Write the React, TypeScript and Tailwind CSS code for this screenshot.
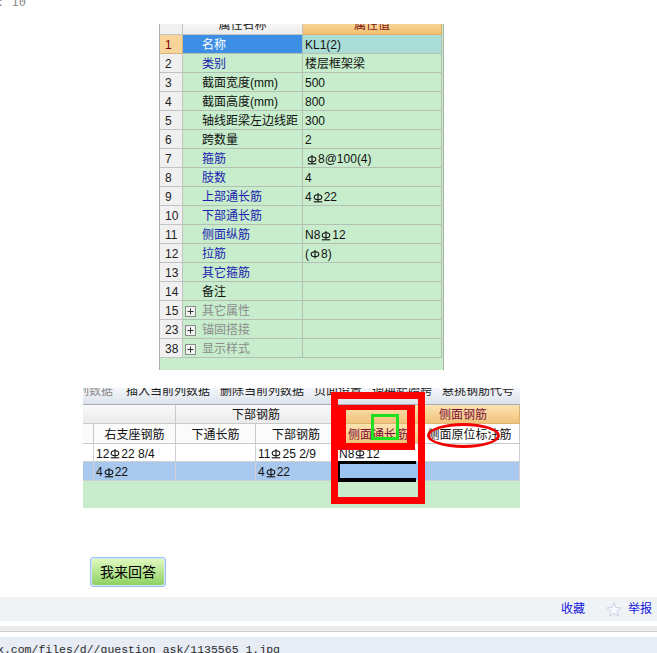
import React from "react";

const SANS = "font-['Liberation_Sans','Noto_Sans_CJK_SC',sans-serif]";

function Rebar({ bar = true }: { bar?: boolean }) {
  return (
    <svg width="10" height="11" viewBox="0 0 10 11" className="inline-block align-[-1px] mx-[1px]">
      <ellipse cx="5" cy="5.2" rx="3.8" ry="2.5" fill="none" stroke="currentColor" strokeWidth="1.1" />
      <line x1="5" y1="1" x2="5" y2="9.6" stroke="currentColor" strokeWidth="1.1" />
      {bar && <line x1="0.8" y1="9.8" x2="9.2" y2="9.8" stroke="currentColor" strokeWidth="1.1" />}
    </svg>
  );
}

function PlusBox() {
  return (
    <svg width="11" height="11" viewBox="0 0 11 11" className="shrink-0">
      <rect x="0.5" y="0.5" width="10" height="10" fill="#f2f2f2" stroke="#8a8a8a" />
      <line x1="2.5" y1="5.5" x2="8.5" y2="5.5" stroke="#333" strokeWidth="1" />
      <line x1="5.5" y1="2.5" x2="5.5" y2="8.5" stroke="#333" strokeWidth="1" />
    </svg>
  );
}

type Row = {
  n: string;
  name: string;
  val?: React.ReactNode;
  color: "blue" | "black" | "gray";
  plus?: boolean;
  sel?: boolean;
};

const rows: Row[] = [
  { n: "1", name: "名称", val: "KL1(2)", color: "black", sel: true },
  { n: "2", name: "类别", val: "楼层框架梁", color: "blue" },
  { n: "3", name: "截面宽度(mm)", val: "500", color: "black" },
  { n: "4", name: "截面高度(mm)", val: "800", color: "black" },
  { n: "5", name: "轴线距梁左边线距", val: "300", color: "black" },
  { n: "6", name: "跨数量", val: "2", color: "black" },
  {
    n: "7",
    name: "箍筋",
    val: (
      <>
        <span className="ml-[1px]" />
        <Rebar />
        8@100(4)
      </>
    ),
    color: "blue",
  },
  { n: "8", name: "肢数", val: "4", color: "blue" },
  {
    n: "9",
    name: "上部通长筋",
    val: (
      <>
        4<Rebar />22
      </>
    ),
    color: "blue",
  },
  { n: "10", name: "下部通长筋", color: "blue" },
  {
    n: "11",
    name: "侧面纵筋",
    val: (
      <>
        N8<Rebar />12
      </>
    ),
    color: "blue",
  },
  {
    n: "12",
    name: "拉筋",
    val: (
      <>
        (<Rebar bar={false} />8)
      </>
    ),
    color: "blue",
  },
  { n: "13", name: "其它箍筋", color: "blue" },
  { n: "14", name: "备注", color: "black" },
  { n: "15", name: "其它属性", color: "gray", plus: true },
  { n: "23", name: "锚固搭接", color: "gray", plus: true },
  { n: "38", name: "显示样式", color: "gray", plus: true },
];

const nameColor = {
  blue: "text-[#1c1cb0]",
  black: "text-[#111111]",
  gray: "text-[#8c8c8c]",
};

function TopTable() {
  return (
    <div className={`ml-[159px] mt-[17px] w-[285px] h-[346px] overflow-hidden border-x border-[#a7b1a7] bg-[#c7edcc] ${SANS} text-[12px]`}>
      <div className="-mt-[8px]">
        <div className="flex h-[19px]">
          <div className="w-[23px] border-r border-b border-[#c4c4c4] bg-[#f0f0f0]" />
          <div className="w-[120px] border-r border-b border-[#c4c4c4] bg-gradient-to-b from-[#fdfdfd] to-[#ececec] flex items-center justify-center leading-[12px] text-[#222]">
            属性名称
          </div>
          <div className="w-[139px] border-r border-b border-[#d9ae66] bg-gradient-to-b from-[#fbe3b0] to-[#f1c070] flex items-center justify-center leading-[12px] text-[#7c1010]">
            属性值
          </div>
        </div>
        {rows.map((r) => (
          <div key={r.n} className="flex h-[19px]">
            <div
              className={`w-[23px] border-r border-b flex items-center pl-[5px] pt-[2px] leading-[12px] ${
                r.sel ? "bg-[#f8d49a] text-[#7a0000] border-[#d6b37a]" : "bg-[#f0f0f0] text-[#222] border-[#c2c2c2]"
              }`}
            >
              {r.n}
            </div>
            <div
              className={`w-[120px] border-r border-b border-[#b3c0b3] flex items-center pt-[2px] leading-[12px] whitespace-nowrap ${
                r.sel ? "bg-[#3d8fe6] text-white" : nameColor[r.color]
              } ${r.plus ? "pl-[2px]" : "pl-[19px]"}`}
            >
              {r.plus && <PlusBox />}
              {r.plus && <span className="w-[6px]" />}
              {r.name}
            </div>
            <div
              className={`w-[139px] border-r border-b border-[#b3c0b3] flex items-center pl-[2px] pt-[2px] leading-[12px] text-[#111] whitespace-nowrap ${
                r.sel ? "bg-[#a9ddd5]" : ""
              }`}
            >
              {r.val}
            </div>
          </div>
        ))}
      </div>
    </div>
  );
}

function BottomTable() {
  const hd = "border-r border-b border-[#c9c9c9] flex items-center justify-center pt-[2px] leading-[12px]";
  const cell = "border-r border-b border-[#d0d0d0] flex items-center pl-[2px] pt-[2px] leading-[12px] whitespace-nowrap";
  return (
    <div className={`relative ml-[83px] mt-[18px] w-[437px] ${SANS} text-[12px]`}>
      {/* toolbar */}
      <div className="h-[17px] overflow-hidden border-b border-[#a6adb6] bg-gradient-to-b from-[#f4f6fa] to-[#dde3ec]">
        <div className="-mt-[4px] flex gap-[10px] whitespace-nowrap leading-[14px] text-[#1a1a1a]">
          <span className="-ml-[6px] text-[#8a8a8a]">列数据</span>
          <span className="ml-[3px]">插入当前列数据</span>
          <span>删除当前列数据</span>
          <span>页面设置</span>
          <span>调换起始跨</span>
          <span>悬挑钢筋代号</span>
        </div>
      </div>
      {/* header row 1 */}
      <div className="flex h-[19px]">
        <div className={`w-[93px] ${hd} bg-gradient-to-b from-[#f9f9f9] to-[#ebebeb]`} />
        <div className={`w-[161px] ${hd} bg-gradient-to-b from-[#f9f9f9] to-[#ebebeb] text-[#111]`}>下部钢筋</div>
        <div className={`w-[183px] ${hd} pl-[70px] border-[#dcb575] bg-gradient-to-b from-[#fbe3b1] to-[#f2c27a] text-[#7a1038]`}>
          侧面钢筋
        </div>
      </div>
      {/* header row 2 */}
      <div className="flex h-[20px] bg-[#fbfbfb]">
        <div className={`w-[11px] ${hd}`} />
        <div className={`w-[82px] ${hd} text-[#111]`}>右支座钢筋</div>
        <div className={`w-[80px] ${hd} text-[#111]`}>下通长筋</div>
        <div className={`w-[81px] ${hd} text-[#111]`}>下部钢筋</div>
        <div className={`w-[83px] ${hd} bg-gradient-to-b from-[#fbe3b1] to-[#f2c27a] text-[#7a1038]`}>侧面通长筋</div>
        <div className={`w-[100px] ${hd} bg-white text-[#111]`}>侧面原位标注筋</div>
      </div>
      {/* data row 1 */}
      <div className="flex h-[18px] bg-white text-[#111]">
        <div className={`w-[11px] ${cell}`} />
        <div className={`w-[82px] ${cell}`}>
          12<Rebar />22 8/4
        </div>
        <div className={`w-[80px] ${cell}`} />
        <div className={`w-[81px] ${cell}`}>
          11<Rebar />25 2/9
        </div>
        <div className={`w-[83px] ${cell}`}>
          N8<Rebar />12
        </div>
        <div className={`w-[100px] ${cell}`} />
      </div>
      {/* data row 2 */}
      <div className="flex h-[19px] bg-[#a8c8ee] text-[#111]">
        <div className={`w-[11px] ${cell} border-[#b9cfe9]`} />
        <div className={`w-[82px] ${cell} border-[#b9cfe9]`}>
          4<Rebar />22
        </div>
        <div className={`w-[80px] ${cell} border-[#b9cfe9]`} />
        <div className={`w-[81px] ${cell} border-[#b9cfe9]`}>
          4<Rebar />22
        </div>
        <div className={`w-[83px] ${cell} border-[#b9cfe9] bg-[#9cc4f0]`} />
        <div className={`w-[100px] ${cell} border-[#b9cfe9]`} />
      </div>
      <div className="h-[27px] bg-[#c7edcc]" />

      {/* editing cell highlight */}
      <div className="absolute left-[255px] top-[73px] w-[78px] h-[21px] border-t-[3px] border-b-[4px] border-l-2 border-black" />
      {/* red annotation frames */}
      <div className="absolute left-[248px] top-[4px] w-[94px] h-[112px] border-[7px] border-[#ff0000]" />
      <div className="absolute left-[255px] top-[17px] w-[77px] h-[45px] border-t-[5px] border-x-[8px] border-b-[7px] border-[#ff0000]" />
      <div className="absolute left-[288px] top-[26px] w-[28px] h-[26px] border-[3px] border-[#1ee01e]" />
      <div className="absolute left-[344px] top-[35px] w-[73px] h-[25px] rounded-[50%] border-[3px] border-[#f20000]" />
    </div>
  );
}

function Star() {
  return (
    <svg width="16" height="15" viewBox="0 0 16 15">
      <path
        d="M8 0.8 L10 5.6 L15.2 5.9 L11.2 9.2 L12.5 14.2 L8 11.4 L3.5 14.2 L4.8 9.2 L0.8 5.9 L6 5.6 Z"
        fill="#f6f8fc"
        stroke="#c9d1e2"
        strokeWidth="1"
        strokeLinejoin="round"
      />
    </svg>
  );
}

export default function App() {
  return (
    <div className="relative w-[657px] h-[653px] overflow-hidden bg-white">
      <div className="h-[7px] overflow-hidden">
        <div className="-mt-[5px] -ml-[3px] leading-[14px] text-[12px] text-[#8c8c8c] font-['DejaVu_Sans_Mono',monospace] whitespace-nowrap">
          : 10
        </div>
      </div>
      <TopTable />
      <BottomTable />
      <div className="ml-[90px] mt-[49px] w-[76px] h-[30px] rounded-[3px] border border-[#9fc3ef] p-[1px] bg-[#cfe6fa]">
        <div className={`w-full h-full rounded-[2px] bg-gradient-to-b from-[#e0f9bf] to-[#8ed160] flex items-center justify-center text-[14px] leading-[14px] text-black ${SANS}`}>
          我来回答
        </div>
      </div>
      <div className={`mt-[10px] h-[24px] bg-[#eff3f5] flex items-center justify-end pr-[5px] text-[12px] leading-[12px] text-[#1414d8] ${SANS}`}>
        <span>收藏</span>
        <span className="ml-[21px] mr-[6px] flex">
          <Star />
        </span>
        <span>举报</span>
      </div>
      <div className="mt-[5px] h-[6px] bg-[#ececec] border-b border-[#cfcfcf]" />
      <div className="mt-[5px] h-[20px] bg-[#e8edf5] pt-[6px]">
        <div className="-ml-[3px] font-['Liberation_Mono',monospace] text-[11.5px] leading-[14px] text-[#2a2a2a] whitespace-nowrap">
          x.com/files/d//question_ask/1135565_1.jpg
        </div>
      </div>
    </div>
  );
}
